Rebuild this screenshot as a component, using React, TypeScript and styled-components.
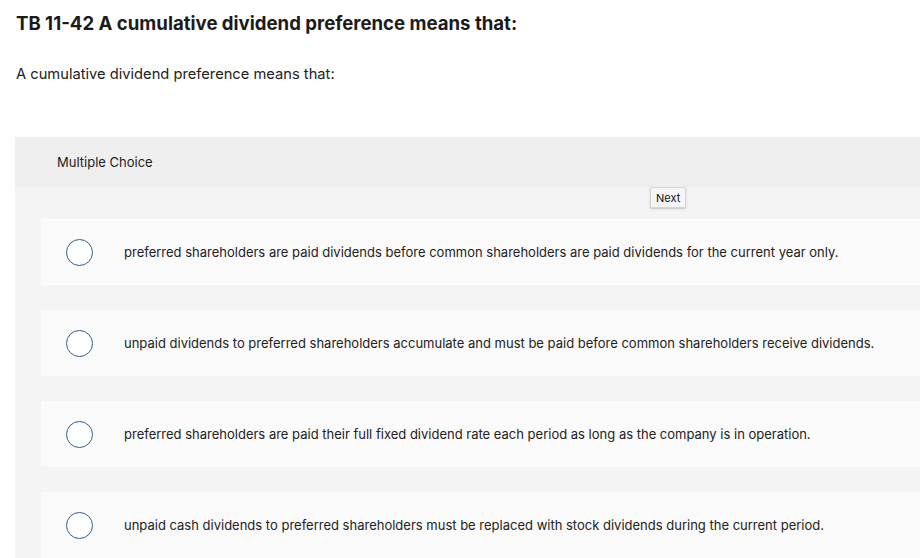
import React from 'react'
import styled, { createGlobalStyle } from 'styled-components'

const GlobalStyle = createGlobalStyle`
  html, body {
    margin: 0;
    padding: 0;
    background: #fff;
    font-family: Inter, "Liberation Sans", sans-serif;
    color: #1a1a1a;
  }
`

const choices = [
  'preferred shareholders are paid dividends before common shareholders are paid dividends for the current year only.',
  'unpaid dividends to preferred shareholders accumulate and must be paid before common shareholders receive dividends.',
  'preferred shareholders are paid their full fixed dividend rate each period as long as the company is in operation.',
  'unpaid cash dividends to preferred shareholders must be replaced with stock dividends during the current period.',
]

export default function App() {
  return (
    <Page>
      <GlobalStyle />
      <Title>TB 11-42 A cumulative dividend preference means that:</Title>
      <Prompt>A cumulative dividend preference means that:</Prompt>
      <Panel>
        <PanelHeader>Multiple Choice</PanelHeader>
        <PanelBody>
          <NavRow>
            <NextButton>Next</NextButton>
          </NavRow>
          <ChoiceList>
            {choices.map((c, i) => (
              <Choice key={i}>
                <Radio />
                <ChoiceText>{c}</ChoiceText>
              </Choice>
            ))}
          </ChoiceList>
        </PanelBody>
      </Panel>
    </Page>
  )
}

const Page = styled.div`
  width: 920px;
  height: 558px;
  overflow: hidden;
  padding: 12px 0 0 15px;
  box-sizing: border-box;
`

const Title = styled.h1`
  margin: 0 0 0 1px;
  font-size: 18.6px;
  font-weight: 700;
  line-height: 22px;
  color: #1b1b1b;
`

const Prompt = styled.p`
  margin: 30px 0 0 1px;
  font-size: 14.7px;
  line-height: 20px;
  color: #222;
`

const Panel = styled.div`
  margin-top: 53px;
  background: #f4f4f4;
`

const PanelHeader = styled.div`
  height: 50px;
  background: #efefef;
  display: flex;
  align-items: center;
  padding-left: 42px;
  font-size: 13px;
  color: #222;
`

const PanelBody = styled.div`
  padding-left: 26px;
`

const NavRow = styled.div`
  height: 32px;
  display: flex;
  align-items: flex-start;
  padding-left: 609px;
`

const NextButton = styled.button`
  height: 21px;
  padding: 0 5px;
  font-family: Inter, "Liberation Sans", sans-serif;
  font-size: 11px;
  color: #111;
  background: #f6f6f6;
  border: 1px solid #d6d6d6;
  border-radius: 1px;
  box-shadow: 0 1px 2px rgba(0, 0, 0, 0.2);
`

const ChoiceList = styled.div`
  display: flex;
  flex-direction: column;
  gap: 25px;
`

const Choice = styled.div`
  height: 66px;
  background: #fafafa;
  display: flex;
  align-items: center;
  padding-left: 25px;
`

const Radio = styled.span`
  width: 25px;
  height: 25px;
  border: 1.5px solid #2f5f8c;
  border-radius: 50%;
  background: #fff;
  flex-shrink: 0;
`

const ChoiceText = styled.span`
  margin-left: 31px;
  font-size: 13px;
  color: #222;
  white-space: nowrap;
`
